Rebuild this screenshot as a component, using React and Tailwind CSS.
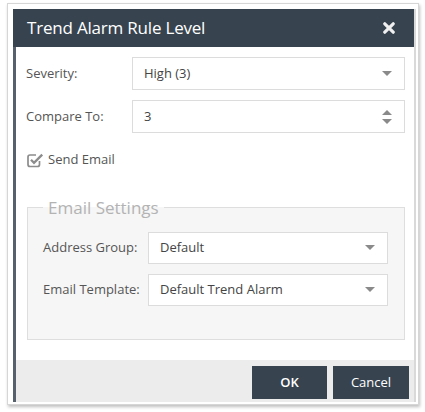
const Caret = () => (
    <svg width="10" height="6" viewBox="0 0 10 6" className="shrink-0">
        <path d="M0 0 L10 0 L5 5 Z" fill="#8a8a8a" />
    </svg>
);

const Spinner = () => (
    <svg width="10" height="16" viewBox="0 0 10 16" className="shrink-0">
        <path d="M0 6 L10 6 L5 1 Z" fill="#8a8a8a" />
        <path d="M0 10 L10 10 L5 15 Z" fill="#8a8a8a" />
    </svg>
);

const CheckSquare = () => (
    <svg width="17" height="16" viewBox="0 0 17 16" className="shrink-0">
        <path
            d="M12.5 9 V12.5 Q12.5 14.5 10.5 14.5 H3 Q1 14.5 1 12.5 V5 Q1 3 3 3 H9"
            fill="none"
            stroke="#8c8c8c"
            strokeWidth="1.7"
        />
        <path
            d="M4 7.8 L7 10.8 L15.2 2.6"
            fill="none"
            stroke="#8c8c8c"
            strokeWidth="2.3"
        />
    </svg>
);

const SelectBox = ({ value, width, height, spinner }) => (
    <div
        className={`flex items-center justify-between bg-white border border-[#dcdcdc] pl-[11px] pr-[12px] text-[13px] text-[#444] ${width} ${height}`}
    >
        <span>{value}</span>
        {spinner ? <Spinner /> : <Caret />}
    </div>
);

const App = () => {
    return (
        <div className="w-[425px] h-[412px] bg-white pt-[3px] pl-[7px] font-['Open_Sans',sans-serif]">
            {/* outer frame */}
            <div className="w-[412px] h-[402px] bg-white border border-[#d6d6d6] shadow-[1px_2px_3px_rgba(0,0,0,0.25)] pt-[5px] pl-[5px]">
                <div className="w-[403px] h-[393px] flex flex-col border-l-[3px] border-l-[#56616d] border-r-2 border-r-[#d9d9d9]">
                    {/* header */}
                    <div className="h-[38px] bg-[#37444f] flex items-center justify-between pl-[14px] pr-[19px] -ml-[3px]">
                        <span className="text-white text-[17px] tracking-[-0.2px]">Trend Alarm Rule Level</span>
                        <svg width="12" height="12" viewBox="0 0 12 12">
                            <path
                                d="M1.8 1.8 L10.2 10.2 M10.2 1.8 L1.8 10.2"
                                stroke="#f0f0f0"
                                strokeWidth="3.2"
                                strokeLinecap="round"
                            />
                        </svg>
                    </div>

                    {/* body */}
                    <div className="flex-1 bg-white pt-[10px] pl-[10px] pr-[8px]">
                        <div className="flex items-center">
                            <label className="w-[106px] text-[13px] text-[#555]">Severity:</label>
                            <SelectBox value="High (3)" width="w-[273px]" height="h-[33px]" />
                        </div>
                        <div className="flex items-center mt-[10px]">
                            <label className="w-[106px] text-[13px] text-[#555]">Compare To:</label>
                            <SelectBox value="3" width="w-[273px]" height="h-[33px]" spinner />
                        </div>
                        <div className="flex items-center gap-[4px] mt-[17px] ml-[1px]">
                            <CheckSquare />
                            <span className="text-[13px] text-[#555]">Send Email</span>
                        </div>

                        <fieldset className="mt-[27px] ml-[1px] w-[378px] h-[143px] border border-[#dedede] bg-[#f6f6f6] pl-[15px]">
                            <legend className="px-[5px] text-[17px] text-[#b3b3b3] leading-[22px]">
                                Email Settings
                            </legend>
                            <div className="flex items-center mt-[13px]">
                                <label className="w-[105px] text-[13px] text-[#555]">Address Group:</label>
                                <SelectBox value="Default" width="w-[240px]" height="h-[32px]" />
                            </div>
                            <div className="flex items-center mt-[10px]">
                                <label className="w-[105px] text-[13px] text-[#555]">Email Template:</label>
                                <SelectBox value="Default Trend Alarm" width="w-[240px]" height="h-[32px]" />
                            </div>
                        </fieldset>
                    </div>

                    {/* footer */}
                    <div className="h-[42px] bg-[#ececec] flex items-start justify-end gap-[6px] pt-[6px] pr-[5px]">
                        <button className="w-[75px] h-[33px] bg-[#37444f] text-white text-[13px] font-semibold">OK</button>
                        <button className="w-[76px] h-[33px] bg-[#37444f] text-white text-[13px]">Cancel</button>
                    </div>
                </div>
            </div>
        </div>
    );
};

export default App;
